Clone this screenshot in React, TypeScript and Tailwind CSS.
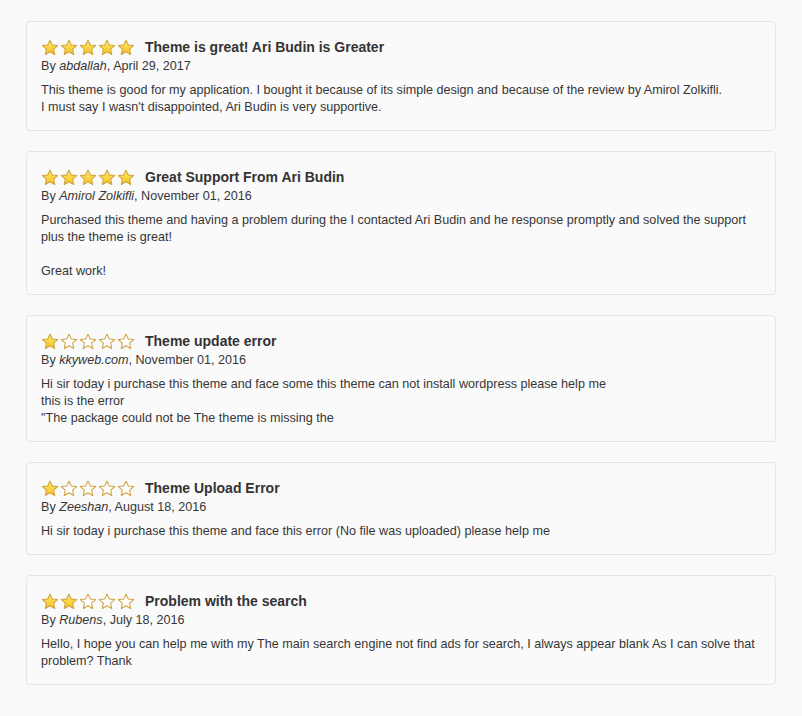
import React from "react";

type Review = {
  rating: number;
  title: string;
  author: string;
  date: string;
  body: React.ReactNode;
};

const reviews: Review[] = [
  {
    rating: 5,
    title: "Theme is great! Ari Budin is Greater",
    author: "abdallah",
    date: "April 29, 2017",
    body: (
      <>
        This theme is good for my application. I bought it because of its simple design and because of the review by Amirol Zolkifli.
        <br />
        I must say I wasn't disappointed, Ari Budin is very supportive.
      </>
    ),
  },
  {
    rating: 5,
    title: "Great Support From Ari Budin",
    author: "Amirol Zolkifli",
    date: "November 01, 2016",
    body: (
      <>
        Purchased this theme and having a problem during the I contacted Ari Budin and he response promptly and solved the support plus the theme is great!
        <br />
        <br />
        Great work!
      </>
    ),
  },
  {
    rating: 1,
    title: "Theme update error",
    author: "kkyweb.com",
    date: "November 01, 2016",
    body: (
      <>
        Hi sir today i purchase this theme and face some this theme can not install wordpress please help me
        <br />
        this is the error
        <br />
        "The package could not be The theme is missing the
      </>
    ),
  },
  {
    rating: 1,
    title: "Theme Upload Error",
    author: "Zeeshan",
    date: "August 18, 2016",
    body: <>Hi sir today i purchase this theme and face this error (No file was uploaded) please help me</>,
  },
  {
    rating: 2,
    title: "Problem with the search",
    author: "Rubens",
    date: "July 18, 2016",
    body: (
      <>
        Hello, I hope you can help me with my The main search engine not find ads for search, I always appear blank As I can solve that problem? Thank
      </>
    ),
  },
];

function Star({ filled }: { filled: boolean }) {
  return (
    <svg width="18" height="17" viewBox="0 0 24 23" className="block">
      <defs>
        <linearGradient id="sg" x1="0" y1="0" x2="0" y2="1">
          <stop offset="0%" stopColor="#ffe873" />
          <stop offset="100%" stopColor="#f6c21a" />
        </linearGradient>
      </defs>
      <polygon
        points="12,1.5 15.1,8.1 22.3,8.9 16.9,13.8 18.4,21 12,17.3 5.6,21 7.1,13.8 1.7,8.9 8.9,8.1"
        fill={filled ? "url(#sg)" : "#ffffff"}
        stroke="#cfa13c"
        strokeWidth="1.4"
        strokeLinejoin="round"
      />
    </svg>
  );
}

function Stars({ rating }: { rating: number }) {
  return (
    <div className="flex items-center gap-px">
      {[0, 1, 2, 3, 4].map((i) => (
        <Star key={i} filled={i < rating} />
      ))}
    </div>
  );
}

export default function App() {
  return (
    <div
      className="min-h-[716px] bg-[#f9f9f9] px-[26px] pt-[21px] pb-[20px] text-[#363636]"
      style={{ fontFamily: '"Liberation Sans", Arial, sans-serif' }}
    >
      <div className="flex flex-col gap-[20px]">
        {reviews.map((r, idx) => (
          <div
            key={idx}
            className="rounded-[4px] border border-[#e2e6ea] bg-[#fafafa] px-[14px] pt-[15px] pb-[14px]"
          >
            <div className="flex h-[20px] items-center">
              <Stars rating={r.rating} />
              <h3 className="ml-[10px] text-[14px] font-bold leading-[20px] text-[#333333]">{r.title}</h3>
            </div>
            <div className="text-[12.6px] leading-[18px]">
              By <em>{r.author}</em>, {r.date}
            </div>
            <p className="mt-[7px] text-[12.6px] leading-[17px]">{r.body}</p>
          </div>
        ))}
      </div>
    </div>
  );
}
